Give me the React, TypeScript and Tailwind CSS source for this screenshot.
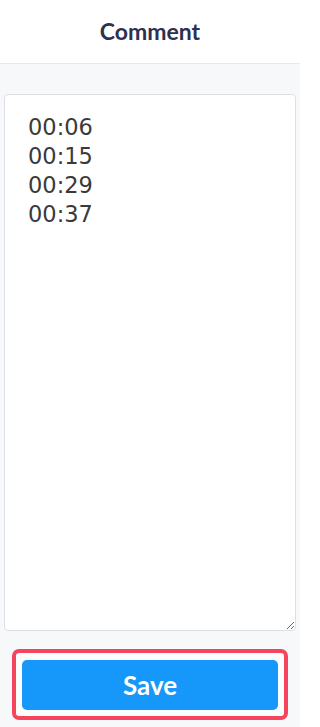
export default function App() {
  return (
    <div className="flex h-[727px] w-[300px] flex-col overflow-hidden bg-[#f7f8fa]" style={{ fontFamily: 'Lato, "Noto Sans", sans-serif' }}>
      {/* Header */}
      <div className="flex h-16 shrink-0 items-center justify-center border-b border-[#e6e8ec] bg-white">
        <h1 className="text-[23px] font-bold text-[#2e3050]">Comment</h1>
      </div>

      {/* Comment box */}
      <div className="flex flex-1 flex-col px-1 pt-[30px]">
        <textarea
          defaultValue={'00:06\n00:15\n00:29\n00:37'}
          className="block h-[537px] w-full resize-y rounded-[4px] border border-[#dcdfe3] bg-white px-[23px] pt-[18px] text-[22.5px] leading-[29px] text-[#3a3a3a] outline-none"
          style={{ fontFamily: '"DejaVu Sans", Verdana, sans-serif' }}
        />

        <div className="mx-2 mt-[18px] rounded-[7px] border-4 border-[#f5455c] bg-[#fbfcfd] px-[6px] pt-[7px] pb-[6px]">
          <button className="flex h-[50px] w-full items-center justify-center rounded-[5px] bg-[#1697fa] text-[26px] font-bold text-white">
            Save
          </button>
        </div>
      </div>
    </div>
  )
}
